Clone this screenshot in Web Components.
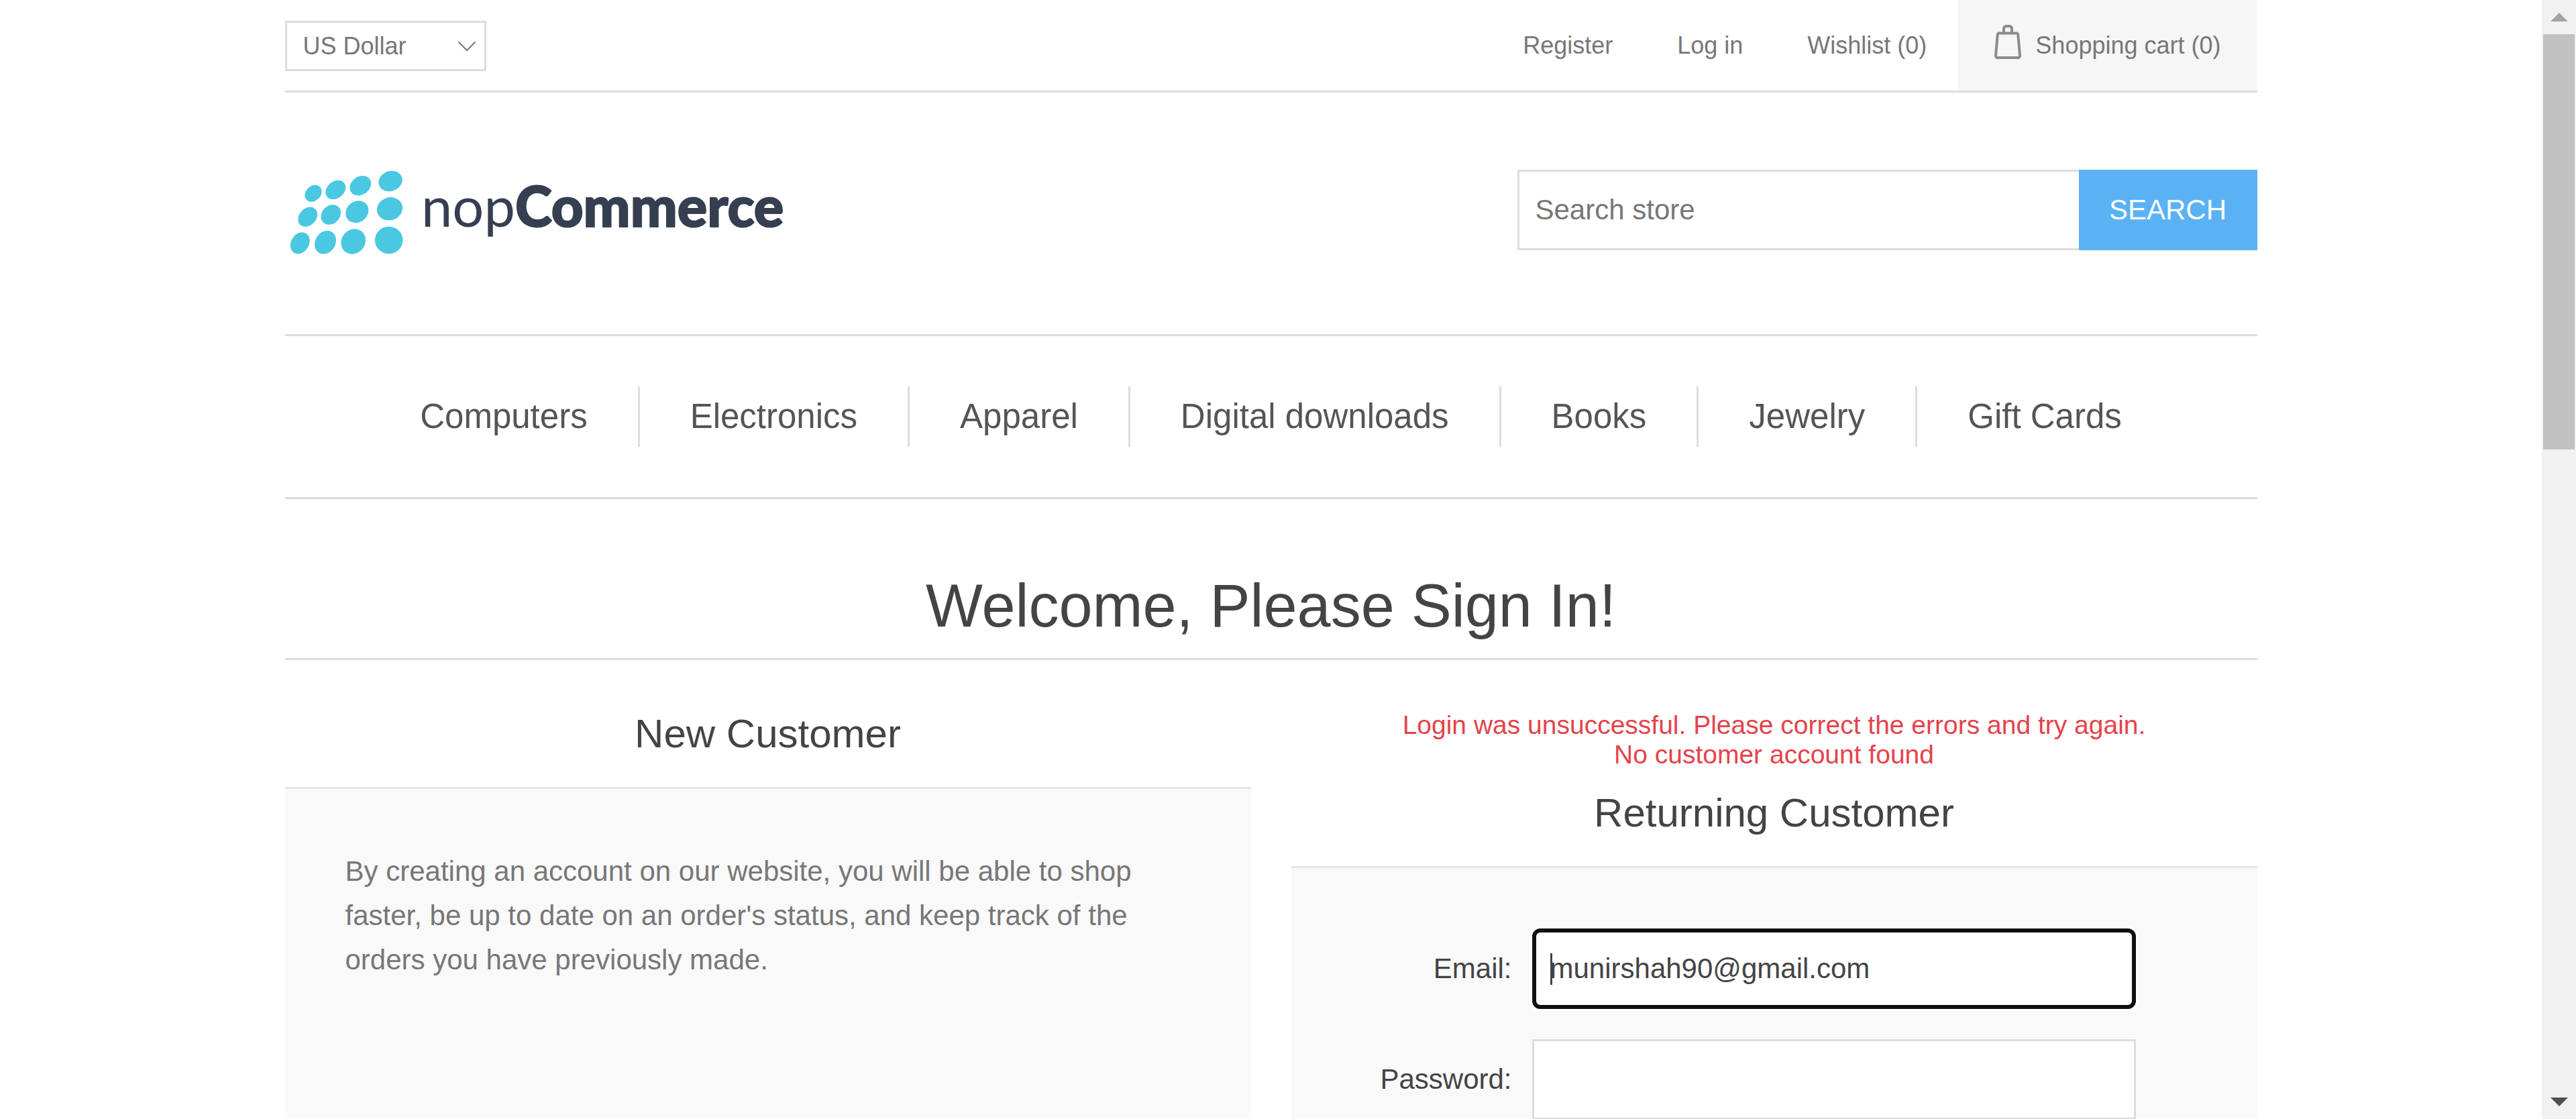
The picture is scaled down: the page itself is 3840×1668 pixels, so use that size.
<!DOCTYPE html>
<html lang="en">
<head>
<meta charset="utf-8">
<title>nopCommerce demo store. Login</title>
<style>
  html, body { margin: 0; height: 100%; }
  body {
    background: #fff;
    color: #777;
    font-family: "Liberation Sans", Arial, Helvetica, sans-serif;
    font-size: 42px;
    --line: #ddd;
    --heading: #444;
  }
</style>
</head>
<body>

<store-page>
  <store-topbar></store-topbar>
  <store-header></store-header>
  <store-menu>
    <menu-link>Computers</menu-link>
    <menu-link>Electronics</menu-link>
    <menu-link>Apparel</menu-link>
    <menu-link>Digital downloads</menu-link>
    <menu-link>Books</menu-link>
    <menu-link>Jewelry</menu-link>
    <menu-link>Gift Cards</menu-link>
  </store-menu>
  <page-title>Welcome, Please Sign In!</page-title>
  <two-columns>
    <info-panel heading="New Customer">
      <info-text>By creating an account on our website, you will be able to shop faster, be up to date on an order's status, and keep track of the orders you have previously made.</info-text>
    </info-panel>
    <info-panel heading="Returning Customer">
      <error-summary slot="message"></error-summary>
      <login-form></login-form>
    </info-panel>
  </two-columns>
</store-page>

<script>
  function define(name, html) {
    const template = document.createElement('template');
    template.innerHTML = '<style>*{box-sizing:border-box}</style>' + html;
    customElements.define(name, class extends HTMLElement {
      constructor() {
        super();
        this.attachShadow({ mode: 'open' }).append(template.content.cloneNode(true));
      }
      connectedCallback() {
        const heading = this.shadowRoot.querySelector('[data-heading]');
        if (heading) heading.textContent = this.getAttribute('heading');
      }
    });
  }

  // Window frame: the clipped page area with the scrollbar beside it
  define('store-page', `
    <style>
      :host { display: grid; grid-template-columns: minmax(0, 1fr) 51px; height: 100vh; overflow: hidden; }
      .view { overflow: hidden; }
      main { max-width: 2940px; margin: 0 auto; }
    </style>
    <div class="view"><main><slot></slot></main></div>
    <page-scrollbar></page-scrollbar>
  `);

  define('page-scrollbar', `
    <style>
      :host { display: grid; grid-template-rows: 51px 1fr 51px; background: #f1f1f1; }
      .end { display: flex; align-items: center; justify-content: center; }
      .track { padding: 0 2px; }
      .thumb { height: 39.5%; background: #c1c1c1; }
      svg { display: block; width: 26px; height: 13px; }
    </style>
    <div class="end"><svg viewBox="0 0 26 13"><path d="M0 13 13 0 26 13Z" fill="#a3a3a3"/></svg></div>
    <div class="track"><div class="thumb"></div></div>
    <div class="end"><svg viewBox="0 0 26 13"><path d="M0 0 13 13 26 0Z" fill="#505050"/></svg></div>
  `);

  define('store-topbar', `
    <style>
      :host { display: flex; justify-content: space-between; align-items: center; border-bottom: 3px solid var(--line); font-size: 36px; line-height: 135px; }
      .currency { position: relative; display: flex; padding-top: 2px; }
      select { appearance: none; width: 300px; height: 75px; padding: 0 24px; border: 3px solid var(--line); border-radius: 0; background: #fff; color: #777; font: inherit; line-height: 69px; }
      .currency svg { position: absolute; right: 15px; top: 32px; width: 28px; height: 16px; pointer-events: none; }
      nav { display: flex; gap: 6px; }
      a { color: #777; text-decoration: none; padding: 0 45px; }
      .cart { display: flex; align-items: center; gap: 21px; padding: 0 54px; margin-left: -4px; background: #f6f6f6; }
      .cart svg { width: 40px; height: 52px; margin-bottom: 11px; }
    </style>
    <div class="currency">
      <select aria-label="Currency selector"><option>US Dollar</option><option>Euro</option></select>
      <svg viewBox="0 0 28 16" fill="none" stroke="#777" stroke-width="2"><path d="M1.500 1.500 14 14 26.500 1.500"/></svg>
    </div>
    <nav>
      <a href="#register">Register</a>
      <a href="#login">Log in</a>
      <a href="#wishlist">Wishlist (0)</a>
      <a class="cart" href="#cart"><svg viewBox="0 0 40 52" fill="none" stroke="#8c8c8c" stroke-width="4"><path d="M7 13.500H33Q35 13.500 35.300 16L38 46.500Q38.200 50 35 50H5Q1.800 50 2 46.500L4.700 16Q5 13.500 7 13.500Z"/><path d="M14 13V7Q14 3 18 3H22Q26 3 26 7V13"/></svg><span>Shopping cart (0)</span></a>
    </nav>
  `);

  define('store-header', `
    <style>
      :host { display: flex; justify-content: space-between; align-items: flex-start; padding: 105px 0; border-bottom: 3px solid var(--line); }
      .logo { display: block; }
      .logo svg { display: block; width: 750px; height: 150px; }
      text { font-family: Lato, "Open Sans", sans-serif; font-size: 83px; fill: #363f51; }
      .bold { font-weight: 900; stroke: #363f51; stroke-width: 2px; }
      form { display: flex; margin: 10px 0 0; }
      input, button { height: 120px; font: inherit; border-radius: 0; }
      input { width: 837px; padding: 0 24px; border: 3px solid var(--line); border-right: 0; color: #777; background: #fff; }
      input::placeholder { color: #777; opacity: 1; }
      button { width: 266px; padding: 0; border: 0; background: #5ab2f4; color: #fff; text-transform: uppercase; }
    </style>
    <a class="logo" href="#home" aria-label="nopCommerce">
      <svg viewBox="0 0 750 150">
        <g fill="#4ac8e2">
          <ellipse cx="42" cy="45.300" rx="14" ry="11" transform="rotate(-45 42 45.300)"/>
          <ellipse cx="75.300" cy="40" rx="16.500" ry="12.500" transform="rotate(-40 75.300 40)"/>
          <ellipse cx="112.300" cy="33.700" rx="17" ry="13.500" transform="rotate(-35 112.300 33.700)"/>
          <ellipse cx="157" cy="27" rx="18" ry="14.800" transform="rotate(-20 157 27)"/>
          <ellipse cx="33.700" cy="80.300" rx="16.300" ry="12.500" transform="rotate(-47 33.700 80.300)"/>
          <ellipse cx="68.300" cy="77" rx="16.200" ry="13.300" transform="rotate(-45 68.300 77)"/>
          <ellipse cx="107.300" cy="72.700" rx="18" ry="15.500" transform="rotate(-38 107.300 72.700)"/>
          <ellipse cx="156" cy="68.300" rx="19.300" ry="17" transform="rotate(-18 156 68.300)"/>
          <ellipse cx="22.300" cy="119.300" rx="17" ry="13.300" transform="rotate(-58 22.300 119.300)"/>
          <ellipse cx="60" cy="118.300" rx="18.200" ry="15" transform="rotate(-58 60 118.300)"/>
          <ellipse cx="101.700" cy="117" rx="19.500" ry="17.500" transform="rotate(-50 101.700 117)"/>
          <ellipse cx="154.700" cy="115" rx="20.800" ry="20.200"/>
        </g>
        <text x="203" y="95">nop<tspan class="bold">Commerce</tspan></text>
      </svg>
    </a>
    <form onsubmit="return false">
      <input type="text" placeholder="Search store" aria-label="Search store">
      <button type="submit">Search</button>
    </form>
  `);

  define('store-menu', `
    <style>
      :host { display: block; padding: 75px 0; border-bottom: 3px solid var(--line); font-size: 51px; line-height: 90px; }
      nav { display: flex; justify-content: center; }
      ::slotted(:not(:first-child)) { border-left: 3px solid var(--line); }
    </style>
    <nav><slot></slot></nav>
  `);

  define('menu-link', `
    <style>
      :host { display: block; }
      a { display: block; padding: 0 75px; color: #555; text-decoration: none; white-space: nowrap; }
    </style>
    <a href="#category"><slot></slot></a>
  `);

  define('page-title', `
    <style>
      :host { display: block; padding: 105px 0 24px; border-bottom: 3px solid var(--line); }
      h1 { margin: 0; font-size: 90px; font-weight: normal; line-height: 108px; color: var(--heading); text-align: center; }
    </style>
    <h1><slot></slot></h1>
  `);

  define('two-columns', `
    <style>
      :host { display: grid; grid-template-columns: 1fr 1fr; gap: 60px; padding-top: 75px; }
    </style>
    <slot></slot>
  `);

  define('info-panel', `
    <style>
      :host { display: flex; flex-direction: column; }
      h2 { margin: 0; padding-bottom: 44px; font-size: 60px; font-weight: normal; line-height: 70px; color: var(--heading); text-align: center; }
      .body { flex: 1; padding: 90px; background: #f9f9f9; border-top: 3px solid #e6e6e6; }
    </style>
    <slot name="message"></slot>
    <h2 data-heading></h2>
    <div class="body"><slot></slot></div>
  `);

  define('info-text', `
    <style>
      :host { display: block; }
      p { margin: 0; line-height: 66px; }
    </style>
    <p><slot></slot></p>
  `);

  define('error-summary', `
    <style>
      :host { display: block; padding-bottom: 30px; color: #e4434b; font-size: 39px; line-height: 44px; text-align: center; }
    </style>
    <div role="alert">
      <div>Login was unsuccessful. Please correct the errors and try again.</div>
      <div>No customer account found</div>
    </div>
  `);

  define('login-form', `
    <style>
      :host { display: block; color: var(--heading); }
      form { display: grid; grid-template-columns: 1fr 900px; align-items: center; gap: 45px 30px; margin: 0; padding-right: 91px; }
      label { text-align: right; }
      input { width: 100%; height: 120px; padding: 0 24px; border: 3px solid var(--line); border-radius: 0; background: #fff; color: var(--heading); font: inherit; }
      /* focused state, with the text caret at the start of the value */
      .current {
        padding: 0 21px; border: 6px solid #101010; border-radius: 12px; box-shadow: 0 0 0 3px #fff;
        background: linear-gradient(#444, #444) 21px 50% / 3px 47px no-repeat #fff;
      }
    </style>
    <form onsubmit="return false">
      <label for="email">Email:</label>
      <input class="current" id="email" type="email" value="munirshah90@gmail.com">
      <label for="password">Password:</label>
      <input id="password" type="password">
    </form>
  `);
</script>
</body>
</html>
